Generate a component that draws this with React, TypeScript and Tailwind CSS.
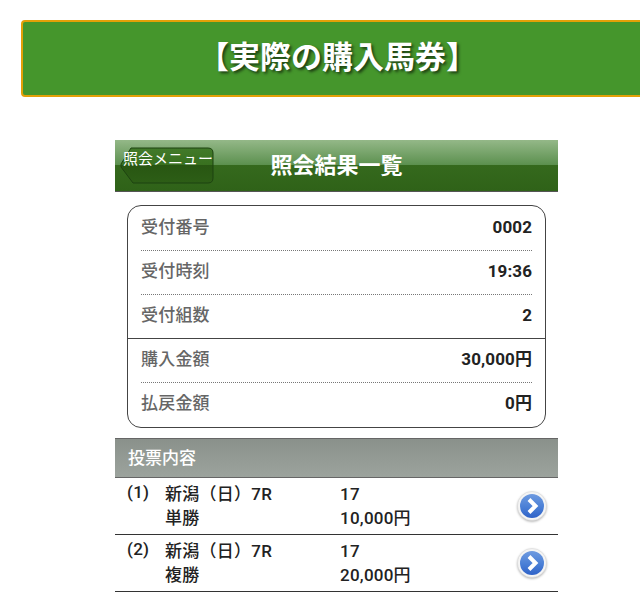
const font = `font-['Roboto','Noto_Sans_CJK_JP',sans-serif]`;

const InfoRow = ({ label, value, line, rowClass }: { label: string; value: string; line?: 'dotted' | 'solid'; rowClass: string }) => (
  <div className={line === 'solid' ? 'border-b border-[#444]' : ''}>
    <div
      className={`mx-[13px] flex items-center justify-between ${rowClass} ${
        line === 'dotted' ? 'border-b border-dotted border-[#777]' : ''
      }`}
    >
      <span className="text-[17px] font-medium tracking-[0.2px] text-[#666]">{label}</span>
      <span className="text-[17px] font-bold tracking-[0.1px] text-[#222]">{value}</span>
    </div>
  </div>
);

const BackButton = () => (
  <svg width="94" height="37" viewBox="0 0 94 37" className="absolute left-[5px] top-[7px]">
    <defs>
      <linearGradient id="back" x1="0" y1="0" x2="0" y2="1">
        <stop offset="0" stopColor="#427a2a" />
        <stop offset="0.48" stopColor="#38701f" />
        <stop offset="0.5" stopColor="#285612" />
        <stop offset="1" stopColor="#2d5e16" />
      </linearGradient>
    </defs>
    <path
      d="M11 1 H88 Q93 1 93 6 V31 Q93 36 88 36 H13 L1 20 V17 Z"
      fill="url(#back)"
      stroke="#1d4310"
      strokeWidth="1"
    />
  </svg>
);

const ArrowIcon = () => (
  <svg width="30" height="32" viewBox="0 0 30 32" className="drop-shadow-[0_1px_1px_rgba(0,0,0,0.3)]">
    <defs>
      <linearGradient id="ball" x1="0" y1="0" x2="0" y2="1">
        <stop offset="0" stopColor="#6f9be0" />
        <stop offset="0.55" stopColor="#4a7fd6" />
        <stop offset="1" stopColor="#2f62c8" />
      </linearGradient>
    </defs>
    <circle cx="15" cy="16" r="14.5" fill="#f4f4f4" stroke="#d5d5d5" strokeWidth="0.5" />
    <circle cx="15" cy="16" r="12" fill="url(#ball)" />
    <path d="M12 9.5 L18.5 16 L12 22.5" fill="none" stroke="#fff" strokeWidth="4" strokeLinejoin="miter" />
  </svg>
);

const VoteRow = ({ no, race, type, num, amount }: { no: string; race: string; type: string; num: string; amount: string }) => (
  <div className="flex h-[57px] border-b border-[#333] text-[17px] leading-[24px] tracking-[0.25px] text-[#222]">
    <span className="w-[50px] pl-[12px] pt-[2px] font-medium">{no}</span>
    <div className="w-[175px] pt-[4px] font-medium">
      <p>{race}</p>
      <p>{type}</p>
    </div>
    <div className="flex-1 pt-[4px] font-medium">
      <p>{num}</p>
      <p>{amount}</p>
    </div>
    <div className="flex w-[41px] items-start pt-[12px]">
      <ArrowIcon />
    </div>
  </div>
);

export default function App() {
  return (
    <div className={`h-[615px] w-[640px] overflow-hidden bg-white pt-[20px] ${font}`}>
      {/* Banner */}
      <div className="ml-[21px] flex h-[77px] w-[623px] items-center rounded-l-[4px] border-2 border-[#e3a008] bg-[#45962c]">
        <h1 className="ml-[175px] whitespace-nowrap text-[31px] font-bold text-white [text-shadow:2px_2px_3px_rgba(0,0,0,0.6)]">
          【実際の購入馬券】
        </h1>
      </div>

      <div className="ml-[115px] mt-[43px] w-[443px]">
        {/* Title bar */}
        <div className="relative flex h-[52px] items-center justify-center border-b border-[#555] bg-[linear-gradient(#94b888_0%,#5d9150_48%,#35691d_50%,#2f6218_100%)]">
          <h2 className="text-[22px] font-bold text-white">照会結果一覧</h2>
          <BackButton />
          <span className="absolute left-[8px] top-[9px] whitespace-nowrap text-[15px] leading-[20px] text-white">
            照会メニュー
          </span>
        </div>

        {/* Summary card */}
        <div className="mx-[12px] mt-[13px] rounded-[14px] border border-[#444]">
          <InfoRow label="受付番号" value="0002" line="dotted" rowClass="h-[45px] pb-[1px]" />
          <InfoRow label="受付時刻" value="19:36" line="dotted" rowClass="h-[44px] pb-[2px]" />
          <InfoRow label="受付組数" value="2" line="solid" rowClass="h-[43px] pb-[1px]" />
          <InfoRow label="購入金額" value="30,000円" line="dotted" rowClass="h-[44px] pb-[2px]" />
          <InfoRow label="払戻金額" value="0円" rowClass="h-[44px] pb-[3px]" />
        </div>

        {/* Vote list */}
        <div className="mt-[10px] flex h-[40px] items-center border-y border-[#666] bg-[linear-gradient(#8a918b,#9ca39d)] pl-[13px] pt-[1px] text-[17px] font-medium text-white">
          投票内容
        </div>
        <VoteRow no="(1)" race="新潟（日）7R" type="単勝" num="17" amount="10,000円" />
        <VoteRow no="(2)" race="新潟（日）7R" type="複勝" num="17" amount="20,000円" />
      </div>
    </div>
  );
}
